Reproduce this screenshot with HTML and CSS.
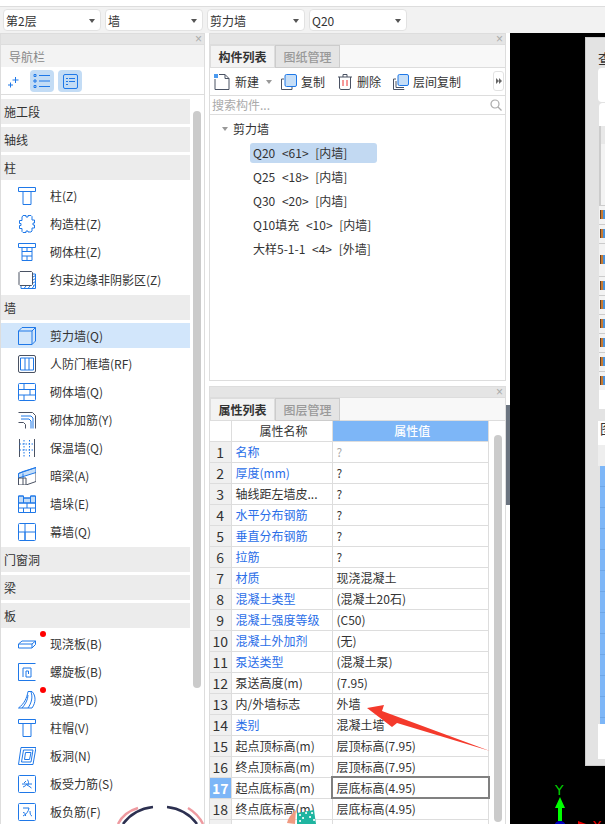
FILE: index.html
```html
<!DOCTYPE html>
<html lang="en">
<head>
  <meta charset="UTF-8">
  <title>剪力墙</title>
  <meta name="viewport" content="width=device-width, initial-scale=1">
  <link rel="stylesheet" href="styles.css">
</head>
<body>

  <div class="top-strip"></div>
  <div class="select-bar">
    <div class="select-box">第2层<i class="caret"></i></div>
    <div class="select-box">墙<i class="caret"></i></div>
    <div class="select-box">剪力墙<i class="caret"></i></div>
    <div class="select-box">Q20<i class="caret"></i></div>
  </div>

  <div class="main">

    <!-- left nav -->
    <div class="panel nav-panel">
      <div class="panel-title"><span class="close">×</span></div>
      <div class="nav-head">导航栏</div>
      <div class="nav-tools">
        <svg class="tool-plus" width="12" height="12" viewBox="0 0 12 12"><path d="M7.5 1v6M4.5 4h6M2.5 6.5v5M0 9h5"/></svg>
        <span class="tile">
          <svg class="ico" width="18" height="14" viewBox="0 0 18 14"><path d="M6 1.5h11M6 7h11M6 12.5h11"/><path d="M1 .5h2v2H1zM1 6h2v2H1zM1 11.5h2v2H1z"/></svg>
        </span>
        <span class="tile">
          <svg class="ico" width="15" height="15" viewBox="0 0 15 15"><rect x=".5" y=".5" width="14" height="14" rx="1.5"/><path d="M3 4.5h2M6 4.5h6M3 7.5h2M6 7.5h6M3 10.5h2"/></svg>
        </span>
      </div>
      <div class="nav-body">
        <div class="nav-list">
          <div class="nav-section">施工段</div>
          <div class="nav-section">轴线</div>
          <div class="nav-section">柱</div>
          <div class="nav-item">
            <svg class="ico" width="18" height="18" viewBox="0 0 18 18"><path d="M.5.5h17v4H.5zM5 4.5h8v13H5z"/></svg>柱(Z)
          </div>
          <div class="nav-item">
            <svg class="ico" width="18" height="18" viewBox="0 0 18 18"><path d="M5 .5h3v1.500h2V.5h3l1 1v3.500h2.500v3h-1.500v2h1.500v3H14v3l-1 1h-3V16H8v1.500H5l-1-1v-3H1.500v-3H3v-2H1.500v-3H4v-3.500z"/></svg>构造柱(Z)
          </div>
          <div class="nav-item">
            <svg class="ico" width="18" height="18" viewBox="0 0 18 18"><path d="M.5.5h17v4H.5zM4 4.500h10v13H4zM4 8.500h10M4 13h10M9 4.500v4M9 13v4.500"/></svg>砌体柱(Z)
          </div>
          <div class="nav-item">
            <svg class="ico" width="18" height="18" viewBox="0 0 18 18"><path class="dark" d="M2 .5h11.500l1 1v12l-1 1H2l-1-1v-12z"/><path d="M15 3h2.500v14.500H3V15M15 6l2.500-1.500M15 9l2.500-1.500M15 12l2.500-1.500M15 15l2.500-1.500M6 17.500 8 15M10 17.500l2-2.500M14 17.500l2-2.500"/></svg>约束边缘非阴影区(Z)
          </div>

          <div class="nav-section">墙</div>
          <div class="nav-item is-selected">
            <svg class="ico" width="18" height="18" viewBox="0 0 18 18"><path d="M.5 4h13.500v13.500H.5zM.5 4 4 .5h13.500V14L14 17.500M14 4 17.500.5"/></svg>剪力墙(Q)
          </div>
          <div class="nav-item">
            <svg class="ico" width="18" height="18" viewBox="0 0 18 18"><rect class="dark" x=".5" y=".5" width="17" height="17" rx="1.500"/><path d="M2.500 3h13v12h-13zM7 3v12M11 3v12"/></svg>人防门框墙(RF)
          </div>
          <div class="nav-item">
            <svg class="ico" width="18" height="18" viewBox="0 0 18 18"><rect x=".5" y=".5" width="17" height="17" rx="1"/><path d="M.5 6.500h17M.5 12h17M6 .5v6M12 6.500V12M6 12v5.500"/></svg>砌体墙(Q)
          </div>
          <div class="nav-item">
            <svg class="ico" width="18" height="18" viewBox="0 0 18 18"><path class="dark" d="M.5 1.500h14l3 3v13M.5 11.500h5l2 2v4"/><path d="M3 5h10l2 2v10.500M3 8h8l2 2v7.500"/></svg>砌体加筋(Y)
          </div>
          <div class="nav-item">
            <svg class="ico" width="18" height="18" viewBox="0 0 18 18"><path class="dark" d="M1.500 0v18M16.500 0v18"/><path class="dots" d="M6 1v17M11.500 1v17M1.500 5h15M1.500 11h15"/></svg>保温墙(Q)
          </div>
          <div class="nav-item">
            <svg class="ico" width="18" height="18" viewBox="0 0 18 18"><path class="fill-light" d="M.5 6.500 18 .5v5L.5 11z"/><path class="dark" d="M.5 11v7h7.500l10-3.500V5.500M.5 11h7.500v7M5 11v7"/><path d="M.5 6.500 5 4.500l13-4M5 6.500V11"/></svg>暗梁(A)
          </div>
          <div class="nav-item">
            <svg class="ico" width="18" height="18" viewBox="0 0 18 18"><path class="fill-light" d="M.5 1h5v2h7V1h5v7H.5z"/><path d="M.5 1h5v2h7V1h5v16.500H.5zM.5 8h17M.5 13h17M9 8v5M5.500 1v7M12.500 1v7M5.500 13v4.500M12.500 13v4.500"/></svg>墙垛(E)
          </div>
          <div class="nav-item">
            <svg class="ico" width="18" height="18" viewBox="0 0 18 18"><rect x=".5" y=".5" width="17" height="17" rx="1"/><path d="M.5 9h17M7 .5V17.500M7 9v8"/></svg>幕墙(Q)
          </div>

          <div class="nav-section">门窗洞</div>
          <div class="nav-section">梁</div>
          <div class="nav-section">板</div>
          <div class="nav-item">
            <svg class="ico" width="18" height="18" viewBox="0 0 18 18"><path d="M.5 9h13.500v4H.5zM.5 9l3.500-3h13.500v3.500L14 13M14 9l3.500-3"/></svg>现浇板(B)
            <i class="red-dot"></i>
          </div>
          <div class="nav-item">
            <svg class="ico" width="18" height="18" viewBox="0 0 18 18"><path class="dark-blue" d="M.5.500h17M.5.500v17h17"/><path d="M5 14V5h8v9H8V8h2.500v3"/></svg>螺旋板(B)
          </div>
          <div class="nav-item">
            <svg class="ico" width="18" height="18" viewBox="0 0 18 18"><path d="M10 .5h4c4 4 4 11 0 16.500H.5C6 13 9 7 10 .5zM13 1c2 5 .500 11-3 16M10 4c0 5-3 9.500-6 13"/></svg>坡道(PD)
            <i class="red-dot"></i>
          </div>
          <div class="nav-item">
            <svg class="ico" width="18" height="18" viewBox="0 0 18 18"><path d="M.5.500h17v4H.5zM5 4.500h8v13H5z"/></svg>柱帽(V)
          </div>
          <div class="nav-item">
            <svg class="ico" width="18" height="18" viewBox="0 0 18 18"><path d="M3 .5h15L15 17.500H.5zM5.500 3h9.500l-2 12H3.500zM7.500 5.500h5.500L11.500 12.500H6.500z"/></svg>板洞(N)
          </div>
          <div class="nav-item">
            <svg class="ico" width="18" height="18" viewBox="0 0 18 18"><rect x=".5" y=".5" width="17" height="17" rx="1"/><path d="M4 9h10M9 4.500c2 1.500 2 4 0 6.500M9 9c-1 1.500-2.500 2.500-4 3M10 10.500l3.500 2.500M8 6 6 8"/></svg>板受力筋(S)
          </div>
          <div class="nav-item">
            <svg class="ico" width="18" height="18" viewBox="0 0 18 18"><rect x=".5" y=".5" width="17" height="17" rx="1"/><path d="M5 5h6c-.5 3.500-2.500 6-6 8M5 9.500c2 0 3 2 2.500 3.500M12 8c0 3 .5 4.500 2 5"/></svg>板负筋(F)
          </div>
        </div>
        <div class="nav-scroll"></div>
      </div>
    </div>

    <!-- middle column -->
    <div class="middle">
      <div class="panel list-panel">
        <div class="panel-title"><span class="close">×</span></div>
        <div class="tabs">
          <div class="tab is-active">构件列表</div>
          <div class="tab">图纸管理</div>
        </div>
        <div class="actions">
          <span class="action action-new">
            <svg class="ico" width="16" height="16" viewBox="0 0 16 16"><path class="dark" d="M1 5v10.500h14V4.500L11 .5H5M11 .5v4h4"/><path class="hatch" d="M0 0h4v4H0z"/></svg>新建<i class="caret caret-light"></i>
          </span>
          <span class="action action-copy">
            <svg class="ico" width="16" height="16" viewBox="0 0 16 16"><path class="dark" d="M3 5H.5v10.500H11V13"/><rect class="fill-light" x="4" y=".5" width="11.500" height="12" rx="1.500"/></svg>复制
          </span>
          <span class="action action-del">
            <svg class="ico" width="14" height="16" viewBox="0 0 14 16"><path class="dark" d="M0 3h14M5 3V.5h4V3M1.500 3v11l1 1.500h9l1-1.500V3"/><path class="red-line" d="M5 6v6M9 6v6"/></svg>删除
          </span>
          <span class="action">
            <svg class="ico" width="16" height="16" viewBox="0 0 16 16"><path class="dark" d="M3 5H.5v10.500H11V15M3 7v6.500h8"/><rect class="fill-light" x="5" y=".5" width="10.500" height="11" rx="1.500"/></svg>层间复制
          </span>
          <span class="more-btn"><i></i><i></i></span>
        </div>
        <div class="search">
          搜索构件...
          <svg class="search-ico" width="12" height="12" viewBox="0 0 12 12"><circle cx="5" cy="5" r="4"/><path d="m8 8 3.500 3.500"/></svg>
        </div>
        <div class="tree">
          <div class="tree-root"><i class="caret caret-light"></i>剪力墙</div>
          <div class="tree-item is-selected">Q20 &lt;61&gt; [内墙]</div>
          <div class="tree-item">Q25 &lt;18&gt; [内墙]</div>
          <div class="tree-item">Q30 &lt;20&gt; [内墙]</div>
          <div class="tree-item">Q10填充 &lt;10&gt; [内墙]</div>
          <div class="tree-item">大样5-1-1 &lt;4&gt; [外墙]</div>
        </div>
      </div>

      <div class="panel props-panel">
        <div class="panel-title"><span class="close">×</span></div>
        <div class="tabs">
          <div class="tab is-active">属性列表</div>
          <div class="tab">图层管理</div>
        </div>
        <div class="props-body">
          <table class="props">
            <colgroup><col class="col-num"><col class="col-name"><col class="col-val"></colgroup>
            <tr><th class="corner"></th><th>属性名称</th><th class="head-val">属性值</th></tr>
            <tr><td class="num">1</td><td class="link">名称</td><td class="muted">?</td></tr>
            <tr><td class="num">2</td><td class="link">厚度(mm)</td><td>?</td></tr>
            <tr><td class="num">3</td><td>轴线距左墙皮...</td><td>?</td></tr>
            <tr><td class="num">4</td><td class="link">水平分布钢筋</td><td>?</td></tr>
            <tr><td class="num">5</td><td class="link">垂直分布钢筋</td><td>?</td></tr>
            <tr><td class="num">6</td><td class="link">拉筋</td><td>?</td></tr>
            <tr><td class="num">7</td><td class="link">材质</td><td>现浇混凝土</td></tr>
            <tr><td class="num">8</td><td class="link">混凝土类型</td><td>(混凝土20石)</td></tr>
            <tr><td class="num">9</td><td class="link">混凝土强度等级</td><td>(C50)</td></tr>
            <tr><td class="num">10</td><td class="link">混凝土外加剂</td><td>(无)</td></tr>
            <tr><td class="num">11</td><td class="link">泵送类型</td><td>(混凝土泵)</td></tr>
            <tr><td class="num">12</td><td>泵送高度(m)</td><td>(7.95)</td></tr>
            <tr><td class="num">13</td><td>内/外墙标志</td><td>外墙</td></tr>
            <tr><td class="num">14</td><td class="link">类别</td><td>混凝土墙</td></tr>
            <tr><td class="num">15</td><td>起点顶标高(m)</td><td>层顶标高(7.95)</td></tr>
            <tr><td class="num">16</td><td>终点顶标高(m)</td><td>层顶标高(7.95)</td></tr>
            <tr><td class="num num-active">17</td><td>起点底标高(m)</td><td class="cell-active">层底标高(4.95)</td></tr>
            <tr><td class="num">18</td><td>终点底标高(m)</td><td>层底标高(4.95)</td></tr>
            <tr><td class="num"></td><td></td><td></td></tr>
          </table>
          <div class="props-scroll"></div>
        </div>
      </div>
    </div>

    <!-- grip between panels and the drawing -->
    <div class="gutter"><span class="grip"></span></div>

    <!-- drawing area -->
    <div class="canvas">
      <div class="dialog">
        <div class="dialog-title">查</div>
        <div class="dialog-box dlg-top"></div>
        <div class="dialog-grid">
          <div class="grid-head"></div>
          <div class="grid-gap"></div>
          <div class="grid-row"><i></i></div>
          <div class="grid-row"><i></i></div>
          <div class="grid-row grid-row-tall"><i></i></div>
          <div class="grid-row"><i></i></div>
          <div class="grid-row"><i></i></div>
          <div class="grid-row"><i></i></div>
          <div class="grid-row"><i></i></div>
          <div class="grid-row"><i></i></div>
          <div class="grid-row"><i></i></div>
        </div>
        <div class="dialog-title dialog-title-2">图</div>
        <div class="blue-head"></div>
        <div class="blue-col"></div>
        <div class="dialog-foot"></div>
      </div>
      <svg class="axis" width="60" height="44" viewBox="0 0 60 44">
        <text class="axis-y" x="5" y="15">Y</text>
        <path class="axis-green" d="M10 17l5 11h-3v13H8V28H5z"/>
        <ellipse class="axis-blue" cx="10" cy="44" rx="5" ry="3"/>
        <path class="axis-red" d="M28 41l8 3H28z"/>
        <text class="axis-x" x="42" y="51">X</text>
      </svg>
    </div>
  </div>

  <!-- stuff pasted on top of the screenshot -->
  <svg class="arrow" width="130" height="50" viewBox="0 0 130 50"><path d="M2 7 19 4 17 10 125 50 32 22 27 26z"/></svg>
  <svg class="ring" width="100" height="20" viewBox="0 0 100 20">
    <path class="ring-pink" d="M8 20Q14 8 28 4M78 4Q88 10 93 20"/>
    <path class="ring-dark" d="M13 20Q24 5 43 3M57 3Q76 5 87 20"/>
  </svg>
  <svg class="sticker" width="30" height="15" viewBox="0 0 30 15">
    <path class="sticker-pink" d="M0 14c1-5 4-9 9-13l-1 14z"/>
    <path class="sticker-teal" d="M10 4l17-3 2 14H10z"/>
    <path class="sticker-dots" d="M13 6h.1M19 4h.1M25 4h.1M16 9h.1M23 8h.1M13 12h.1M27 11h.1"/>
  </svg>

</body>
</html>
```

FILE: styles.css
```css
* { box-sizing:border-box; margin:0; padding:0 }
html, body { height:100%; }
body {
  position:relative;
  width:605px;
  height:824px;
  overflow:hidden;
  background:#fff;
  font:12px/1 "Noto Sans CJK SC", "Noto Sans", sans-serif;
  color:#333;
}
i { display:block; }

.top-strip {
  height:7px;
  background:#fff;
  border-bottom:1px solid #ddd;
}
.select-bar {
  height:26px;
  padding-top:2px;
  padding-left:3px;
  display:flex;
  gap:4px;
  background:#f2f2f2;
}
.select-box {
  position:relative;
  width:98px;
  height:22px;
  padding-left:2px;
  line-height:21px;
  background:#fff;
  border:1px solid #e2e2e2;
  border-radius:4px;
}
.caret {
  width:0; height:0;
  border-left:3px solid transparent;
  border-right:3px solid transparent;
  border-top:4px solid #555;
}
.select-box .caret { position:absolute; right:5px; top:9px; }
.caret-light { border-top-color:#999; }

.main {
  display:flex;
  height:791px;
  background:#fff;
}

.panel {
  border:1px solid #ddd;
  background:#fff;
}
.panel-title {
  height:11px;
  background:#e5e5e5;
  border-bottom:1px solid #ddd;
  position:relative;
}
.close {
  position:absolute;
  right:2px; top:0;
  font:12px/10px "Liberation Sans", sans-serif;
  color:#aaa;
}

/* left nav */
.nav-panel {
  width:205px;
  flex:none;
  border-bottom:none;
}
.nav-head {
  height:22px;
  padding-left:8px;
  line-height:21px;
  background:#f3f3f3;
  color:#888;
  border-top:1px solid #f3f3f3;
}
.nav-tools {
  height:28px;
  padding:3px 0 0 7px;
  display:flex;
  align-items:flex-start;
  border-bottom:1px solid #ddd;
}
.tool-plus {
  margin-top:6px;
  margin-right:10px;
  fill:none;
  stroke:#1f78e8;
}
.tile {
  width:24px;
  height:22px;
  margin-right:4px;
  display:flex;
  align-items:center;
  justify-content:center;
  background:#c3dcf5;
  border-radius:4px;
}
.nav-body {
  display:flex;
  padding-top:4px;
}
.nav-list { width:189px; flex:none; }
.nav-section, .nav-item {
  position:relative;
  height:25px;
  margin-bottom:3px;
  display:flex;
  align-items:center;
}
.nav-section {
  padding-left:3px;
  background:#ececec;
}
.nav-item {
  padding-left:17px;
  gap:14px;
}
.nav-item.is-selected { background:#d2e6fb; }
.red-dot {
  position:absolute;
  left:39px; top:0;
  width:6px; height:6px;
  border-radius:50%;
  background:#f00;
}
.nav-scroll {
  width:8px;
  height:577px;
  margin:12px 0 0 3px;
  background:#cbcbcb;
  border-radius:4px;
}

/* icon strokes */
.ico { flex:none; fill:none; stroke:#1f78e8; stroke-width:1; }
.ico .dark { stroke:#4a5263; }
.ico .dark-blue { stroke:#1f78e8; }
.ico .dots { stroke-dasharray:1.5 1.5; }
.ico .fill-light { fill:#c6def7; }
.ico .hatch { stroke:none; fill:#4a9af0; }
.ico .red-line { stroke:#e33; }

/* middle */
.middle {
  width:297px;
  flex:none;
  margin-left:4px;
  display:flex;
  flex-direction:column;
  gap:5px;
}
.list-panel { height:348px; flex:none; }
.props-panel { flex:1; min-height:0; overflow:hidden; border-bottom:none; }

.tabs {
  height:23px;
  display:flex;
  background:#f8f8f8;
  border-bottom:1px solid #ddd;
}
.tab {
  width:65px;
  height:23px;
  line-height:22px;
  text-align:center;
  background:#e4e4e4;
  color:#999;
  font-weight:500;
  border:1px solid #ccc;
}
.tab.is-active {
  background:#f3f3f3;
  color:#333;
  font-weight:700;
  border-color:#ddd;
}

.actions {
  position:relative;
  height:28px;
  display:flex;
  align-items:center;
  padding-left:4px;
  border-bottom:1px solid #ddd;
}
.action {
  display:flex;
  align-items:center;
  gap:4px;
  margin-right:8px;
}
.action-new { gap:5px; margin-right:9px; }
.action-new .caret { margin-left:2px; }
.action-copy { margin-right:13px; }
.action-del { margin-right:12px; gap:5px; }
.more-btn {
  position:absolute;
  right:1px; top:3px;
  width:11px; height:20px;
  display:flex;
  align-items:center;
  justify-content:center;
  background:#fff;
  border:1px solid #e2e2e2;
  border-radius:3px;
}
.more-btn i {
  width:0; height:0;
  border-top:3px solid transparent;
  border-bottom:3px solid transparent;
  border-left:3px solid #666;
}
.search {
  position:relative;
  height:19px;
  padding-left:2px;
  line-height:18px;
  color:#aaa;
  border-bottom:1px solid #ddd;
}
.search-ico {
  position:absolute;
  right:3px; top:3px;
  fill:none;
  stroke:#aaa;
  stroke-width:1.200;
}
.tree { padding-top:3px; }
.tree-root {
  height:25px;
  padding-left:12px;
  padding-bottom:3px;
  display:flex;
  align-items:center;
  gap:5px;
}
.tree-item {
  width:127px;
  height:20px;
  margin:0 0 4px 40px;
  padding-left:3px;
  line-height:19px;
  white-space:nowrap;
  word-spacing:4px;
  border-radius:3px;
}
.tree-item.is-selected { background:#c2d9f2; }

/* property table */
.props-body { display:flex; }
.props {
  width:279px;
  flex:none;
  table-layout:fixed;
  border-collapse:collapse;
}
.col-num { width:21px; }
.col-name { width:101px; }
.props th, .props td {
  height:21px;
  padding:0 0 0 4px;
  border:1px solid #ddd;
  font-weight:400;
  white-space:nowrap;
  overflow:hidden;
}
.props tr > :first-child { border-left:none; }
.props th { height:20px; text-align:center; background:#fff; border-top:none; }
.props .head-val { background:#7db6f7; color:#fff; font-weight:500; }
.props .num {
  padding:0;
  text-align:center;
  font-size:14px;
  background:#f0f0f0;
}
.props .link { color:#2a6ee8; }
.props .muted { color:#aaa; }
.props .num-active { background:#7db6f7; color:#fff; font-weight:700; }
.props .cell-active { outline:2px solid #808080; outline-offset:-1px; }
.props-scroll {
  width:8px;
  height:387px;
  margin:14px 0 0 5px;
  background:#cbcbcb;
  border-radius:4px;
}

.gutter {
  position:relative;
  width:4px;
  flex:none;
}
.grip {
  position:absolute;
  left:0; top:372px;
  width:4px; height:100px;
  background:#6b7480;
}

/* drawing */
.canvas {
  position:relative;
  flex:1;
  background:#000;
  overflow:hidden;
}
.dialog {
  position:absolute;
  left:75px; top:4px;
  width:60px; height:729px;
  padding:13px 0 0 12px;
  background:#e3e3e3;
  border:1px solid #ccc;
}
.dialog-title {
  height:17px;
  font-size:14px;
  color:#333;
}
.dlg-top {
  height:34px;
  background:#fff;
  border-radius:4px;
}
.dialog-grid {
  margin-top:1px;
  margin-left:1px;
  background:#fff;
  border-radius:4px 0 0 0;
  padding-top:23px;
  height:306px;
}
.grid-head { height:18px; background:#e8e8e8; border-left:2px solid #ccc; }
.grid-gap { height:61px; background:#f3f3f3; border-left:2px solid #ccc; }
.grid-row {
  height:19px;
  padding:4px 0 0 1px;
  background:#f3f3f3;
  border-top:1px solid #ccc;
}
.grid-row-tall { height:33px; padding-top:11px; }
.grid-row i {
  width:6px; height:9px;
  background:linear-gradient(to right, #5a4030 0 1px, #c87a30 1px 3px, #4a90d8 3px);
}
.dialog-title-2 { margin-top:12px; height:24px; background:#fff; padding-left:2px; }
.blue-head { height:21px; background:#eee; }
.blue-col {
  height:258px;
  margin-left:2px;
  background:repeating-linear-gradient(#7db6f7 0 20px, #6ea6e6 20px 21px);
}
.dialog-foot { height:35px; background:#fff; }

.axis {
  position:absolute;
  left:40px; top:747px;
  overflow:hidden;
}
.axis-y { font:14px "DejaVu Sans", sans-serif; fill:#0c0; }
.axis-x { font:14px "DejaVu Sans", sans-serif; fill:#e00; }
.axis-green { fill:#0f0; }
.axis-blue { fill:#0000c0; }
.axis-red { fill:#e00; }

/* overlays */
.arrow {
  position:absolute;
  left:365px; top:701px;
  fill:#f43a2c;
}
.ring {
  position:absolute;
  left:110px; top:804px;
  fill:none;
  stroke-width:2.500;
}
.ring-pink { stroke:#ee9aa0; }
.ring-dark { stroke:#2c3050; }
.sticker {
  position:absolute;
  left:287px; top:809px;
}
.sticker-pink { fill:#f09a80; }
.sticker-teal { fill:#1fb5a0; }
.sticker-dots { fill:none; stroke:#fff; stroke-width:2; stroke-linecap:round; }
```
